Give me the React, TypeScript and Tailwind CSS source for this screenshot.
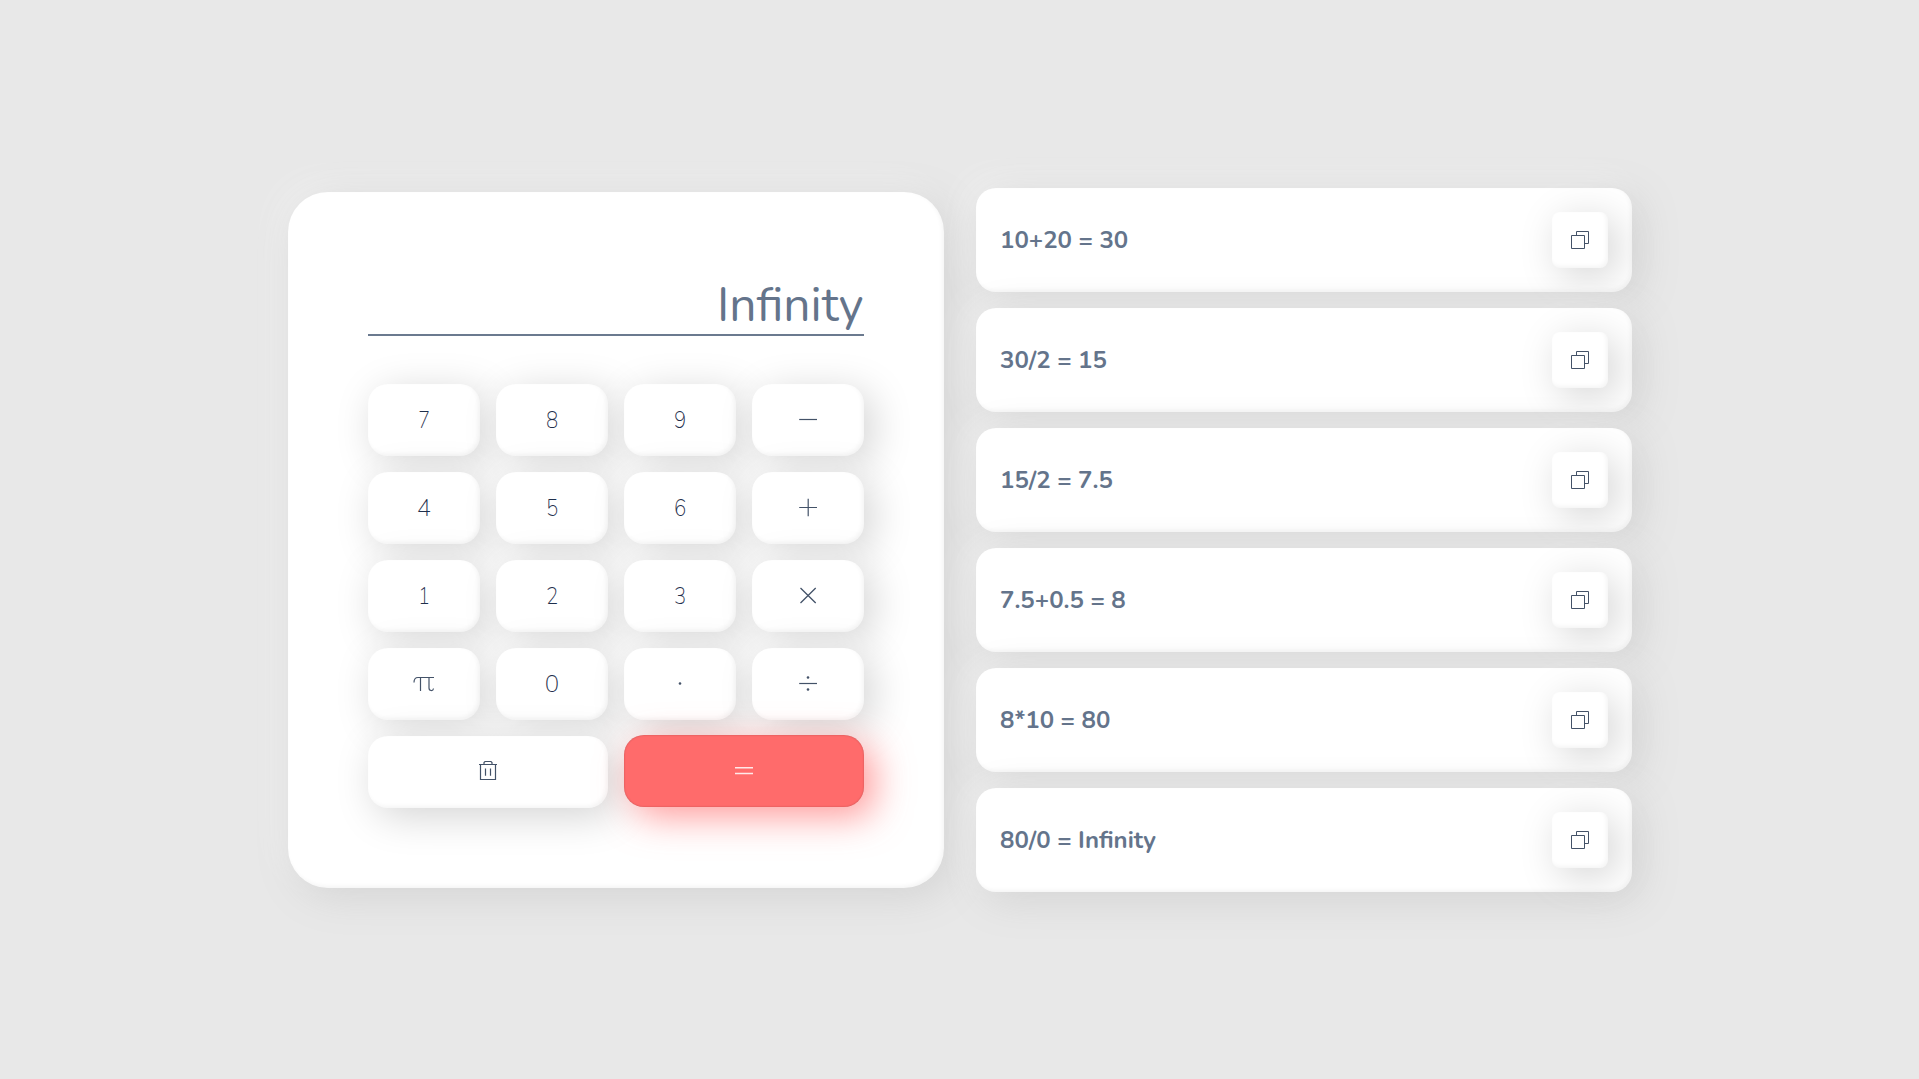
import React from "react";

const SOFT =
  "shadow-[inset_-2px_-2px_4px_rgba(0,0,0,0.045),8px_8px_40px_#d3d3d3,-10px_-10px_32px_rgba(255,255,255,0.4)]";

const history = [
  "10+20 = 30",
  "30/2 = 15",
  "15/2 = 7.5",
  "7.5+0.5 = 8",
  "8*10 = 80",
  "80/0 = Infinity",
];

const INK = "#435268";

function Icon({ d, color = INK, width = 1.2 }: { d: string; color?: string; width?: number }) {
  return (
    <svg
      width="24"
      height="24"
      viewBox="0 0 24 24"
      fill="none"
      stroke={color}
      strokeWidth={width}
    >
      <path d={d} />
    </svg>
  );
}

const Dot = ({ y }: { y: number }) => <circle cx="12" cy={y} r="1.3" fill={INK} />;

const Digit = ({ children, wide = false }: { children: string; wide?: boolean }) => (
  <span className={wide ? "inline-block pl-px" : "inline-block scale-x-[0.85] pl-0.5"}>{children}</span>
);

const keys: { id: string; face: React.ReactNode }[] = [
  { id: "7", face: <Digit>7</Digit> },
  { id: "8", face: <Digit>8</Digit> },
  { id: "9", face: <Digit>9</Digit> },
  { id: "minus", face: <Icon d="M3.2 11.5H21" /> },
  { id: "4", face: <Digit wide>4</Digit> },
  { id: "5", face: <Digit>5</Digit> },
  { id: "6", face: <Digit>6</Digit> },
  { id: "plus", face: <Icon d="M3.2 11.5H21M12.2 2.8V20.2" /> },
  { id: "1", face: <Digit>1</Digit> },
  { id: "2", face: <Digit>2</Digit> },
  { id: "3", face: <Digit>3</Digit> },
  { id: "times", face: <Icon width={1.3} d="M4.5 4L19.7 19M19.7 4L4.5 19" /> },
  {
    id: "pi",
    face: <Icon d="M2 10.5C2 7.5 3.5 5.5 6 5.5H22M8.5 5.5V19M17 5.5V16C17 19 21 19.5 21.5 16.5" />,
  },
  { id: "0", face: <Digit wide>0</Digit> },
  {
    id: "dot",
    face: (
      <svg width="24" height="24" viewBox="0 0 24 24">
        <Dot y={11.5} />
      </svg>
    ),
  },
  {
    id: "divide",
    face: (
      <svg width="24" height="24" viewBox="0 0 24 24">
        <path d="M3.2 11.5H21" stroke={INK} strokeWidth="1.2" />
        <Dot y={5.5} />
        <Dot y={17.5} />
      </svg>
    ),
  },
];

export default function App() {
  return (
    <main className="flex h-[1079px] w-full items-center justify-center gap-8 overflow-hidden bg-[#e8e8e8] font-['Nunito','Lato',sans-serif] text-[#64748b]">
      <section className={`mt-px h-[696px] w-[656px] rounded-[40px] bg-white p-20 ${SOFT}`}>
        <div className="flex h-16 items-end justify-end border-b-2 border-[#6b7a8f] text-[48px] leading-[58px]">
          Infinity
        </div>
        <div className="mt-12 grid grid-cols-4 gap-4">
          {keys.map((k) => (
            <button
              key={k.id}
              aria-label={k.id}
              className={`flex h-[72px] items-center justify-center rounded-[20px] bg-white text-2xl font-extralight text-[#1f2f4c] ${SOFT}`}
            >
              {k.face}
            </button>
          ))}
          <button
            aria-label="Clear"
            className={`col-span-2 flex h-[72px] items-center justify-center rounded-[20px] bg-white ${SOFT}`}
          >
            <Icon d="M3 4.5H21M4.5 4.5V19.5H19.5V4.5M8 4.5V2.5L9 1.5H15L16 2.5V4.5M9.5 8.5V15.8M14.5 8.5V15.8" />
          </button>
          <button
            aria-label="Equals"
            className="col-span-2 -mt-px flex h-[72px] items-center justify-center rounded-[20px] bg-[#ff6b6b] shadow-[inset_0_0_2px_rgba(0,0,0,0.25),10px_10px_36px_rgba(255,90,90,0.6)]"
          >
            <Icon color="#ffe9e9" width={1.6} d="M3 8.7H21M3 14.5H21" />
          </button>
        </div>
      </section>
      <ul className="flex w-[656px] flex-col gap-4">
        {history.map((h) => (
          <li
            key={h}
            className={`flex h-[104px] items-center justify-between rounded-[20px] bg-white pr-6 pl-[24.5px] text-2xl font-bold ${SOFT}`}
          >
            <span>{h}</span>
            <button
              aria-label="Copy"
              className={`flex size-14 items-center justify-center rounded-lg bg-white ${SOFT}`}
            >
              <Icon width={1} d="M3.5 7.5H16.5V20.5H3.5ZM8.5 7.5V3.5H20.5V15.5H16.5" />
            </button>
          </li>
        ))}
      </ul>
    </main>
  );
}
